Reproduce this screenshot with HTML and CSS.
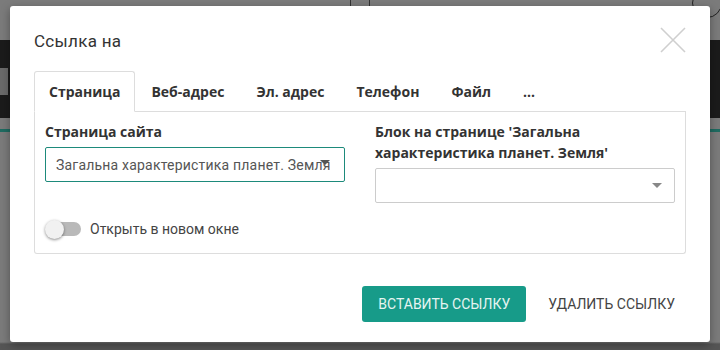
FILE: index.html
```html
<!DOCTYPE html>
<html lang="ru">
<head>
   <meta charset="UTF-8">
   <title>Ссылка на</title>
   <link rel="stylesheet" href="styles.css">
</head>
<body>
   <!-- страница под затемнением -->
   <div class="backdrop">
      <div class="top-strip">
         <span class="tick tick-a"></span>
         <span class="tick tick-b"></span>
         <span class="ring"></span>
      </div>
      <div class="dark-band">
         <div class="band-block"></div>
      </div>
      <div class="teal-line"></div>
      <div class="filler"></div>
   </div>

   <div class="modal">
      <div class="modal-head">
         <h1>Ссылка на</h1>
         <button class="close" aria-label="Закрыть">
            <svg width="26" height="26" viewBox="0 0 26 26">
               <path d="M1 1 L25 25 M25 1 L1 25" stroke="#cfcfcf" stroke-width="1.6" fill="none"/>
            </svg>
         </button>
      </div>

      <ul class="tabs">
         <li class="active">Страница</li>
         <li>Веб-адрес</li>
         <li>Эл. адрес</li>
         <li>Телефон</li>
         <li>Файл</li>
         <li>...</li>
      </ul>

      <div class="panel">
         <div class="cols">
            <div class="col">
               <label class="field-label">Страница сайта</label>
               <div class="select active-select">
                  <span class="select-text">Загальна характеристика планет. Земля</span>
                  <span class="caret dark"></span>
               </div>
            </div>
            <div class="col">
               <label class="field-label">Блок на странице 'Загальна характеристика планет. Земля'</label>
               <div class="select">
                  <span class="select-text"></span>
                  <span class="caret"></span>
               </div>
            </div>
         </div>
         <div class="toggle-row">
            <span class="toggle"><span class="knob"></span></span>
            <span class="toggle-label">Открыть в новом окне</span>
         </div>
      </div>

      <div class="actions">
         <button class="btn-primary">Вставить ссылку</button>
         <button class="btn-flat">Удалить ссылку</button>
      </div>
   </div>
</body>
</html>
```

FILE: styles.css
```css
* {
   margin: 0;
   padding: 0;
   box-sizing: border-box;
}

body {
   width: 720px;
   height: 350px;
   overflow: hidden;
   background-color: #7b7b7b;
   font-family: Roboto, "Noto Sans", sans-serif;
   position: relative;
}

/* фон страницы */
.backdrop {
   display: flex;
   flex-direction: column;
   height: 350px;
}

.top-strip {
   height: 40px;
   position: relative;
}

.tick {
   position: absolute;
   top: 0;
   width: 1px;
   height: 7px;
   background-color: #333;
}

.tick-a { left: 350px; }
.tick-b { left: 369px; }

.ring {
   position: absolute;
   top: -12px;
   left: 692px;
   width: 30px;
   height: 30px;
   border: 1px solid #222;
   border-radius: 50%;
}

.dark-band {
   height: 78px;
   background-color: #1b1b1b;
   padding-top: 28px;
}

.band-block {
   width: 8px;
   height: 27px;
   background-color: #6a6a6a;
}

.teal-line {
   margin-top: 11px;
   height: 3px;
   background-color: #1f6b61;
}

.filler {
   flex: 1;
   background: linear-gradient(to bottom, #7b7b7b 0, #7b7b7b 210px, #555 212px);
}

/* модальное окно */
.modal {
   position: absolute;
   top: 6px;
   left: 10px;
   width: 700px;
   height: 336px;
   background-color: #fff;
   border-radius: 3px;
   box-shadow: 0 3px 10px rgba(0, 0, 0, 0.35);
   padding: 0 24px;
}

.modal-head {
   display: flex;
   justify-content: space-between;
   align-items: flex-start;
   height: 65px;
}

.modal-head h1 {
   font-size: 17px;
   font-weight: 400;
   color: #333;
   margin-top: 25px;
   letter-spacing: 0.3px;
}

.close {
   background: none;
   border: none;
   margin-top: 21px;
   width: 26px;
   height: 26px;
}

.tabs {
   list-style: none;
   display: flex;
   height: 41px;
   border-bottom: 1px solid #ddd;
}

.tabs li {
   padding: 0 15px;
   font-family: "Open Sans", Roboto, sans-serif;
   font-size: 14px;
   font-weight: 700;
   color: #333;
   line-height: 39px;
   border: 1px solid transparent;
   border-radius: 3px 3px 0 0;
}

.tabs li.active {
   border-color: #ddd;
   border-bottom-color: #fff;
   margin-bottom: -1px;
   padding: 0 14px;
   background-color: #fff;
}

.panel {
   border: 1px solid #ddd;
   border-top: none;
   border-radius: 0 0 3px 3px;
   height: 142px;
   padding: 9px 10px 0;
}

.cols {
   display: grid;
   grid-template-columns: 300px 300px;
   column-gap: 30px;
}

.field-label {
   display: block;
   font-family: "Open Sans", Roboto, sans-serif;
   font-size: 14px;
   font-weight: 700;
   color: #333;
   line-height: 21px;
   margin-bottom: 5px;
}

.select {
   height: 35px;
   border: 1px solid #ccc;
   border-radius: 2px;
   display: flex;
   align-items: center;
   padding: 0 10px;
}

.active-select {
   border-color: #1d8a7b;
}

.select-text {
   font-size: 14px;
   color: #555;
   white-space: nowrap;
   overflow: hidden;
   flex: 1;
   letter-spacing: 0.2px;
}

.caret {
   width: 0;
   height: 0;
   border-left: 5px solid transparent;
   border-right: 5px solid transparent;
   border-top: 5px solid #888;
   margin-right: 2px;
}

.caret.dark {
   border-top-color: #555;
   margin-left: -12px;
   margin-top: -4px;
   margin-right: 4px;
}

.toggle-row {
   display: flex;
   align-items: center;
   gap: 9px;
   margin-top: 16px;
}

.toggle {
   width: 36px;
   height: 20px;
   display: flex;
   align-items: center;
   position: relative;
}

.toggle::before {
   content: "";
   position: absolute;
   left: 4px;
   right: 0;
   height: 14px;
   border-radius: 7px;
   background-color: #b9b9b9;
}

.knob {
   position: relative;
   width: 19px;
   height: 19px;
   border-radius: 50%;
   background-color: #f1f1f1;
   box-shadow: 0 1px 3px rgba(0, 0, 0, 0.45);
}

.toggle-label {
   font-size: 14px;
   color: #444;
}

.actions {
   display: flex;
   justify-content: flex-end;
   align-items: center;
   gap: 22px;
   margin-top: 32px;
   padding-right: 11px;
}

.actions button {
   font-family: Roboto, "Noto Sans", sans-serif;
   font-size: 14px;
   text-transform: uppercase;
   border: none;
   background: none;
   cursor: pointer;
}

.btn-primary {
   height: 36px;
   padding: 0 16px;
   background-color: #179b89 !important;
   color: #e6f4f1;
   border-radius: 3px;
}

.btn-flat {
   color: #444;
}
```
